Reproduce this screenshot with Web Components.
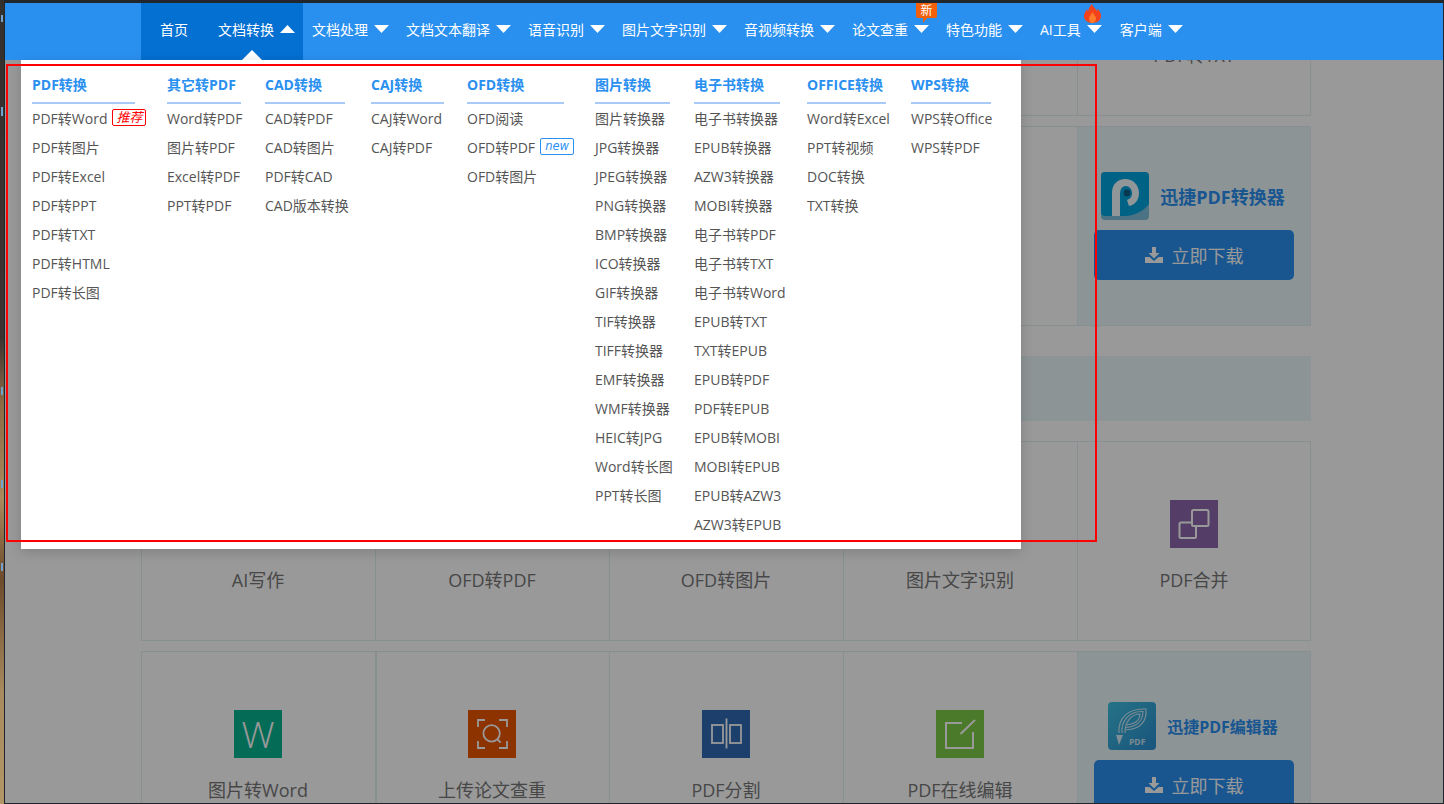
<!DOCTYPE html>
<html lang="zh">
<head>
<meta charset="utf-8">
<title>文档转换</title>
<style>
  html, body { margin: 0; height: 100%; overflow: hidden; background: #222; }
  body { font-family: "Open Sans", "Noto Sans CJK SC", sans-serif; }
</style>
</head>
<body>

<app-shell>
  <site-header>
    <nav-item home>首页</nav-item>
    <nav-item open caret>文档转换</nav-item>
    <nav-item caret>文档处理</nav-item>
    <nav-item caret>文档文本翻译</nav-item>
    <nav-item caret>语音识别</nav-item>
    <nav-item caret>图片文字识别</nav-item>
    <nav-item caret>音视频转换</nav-item>
    <nav-item caret>论文查重<new-flag slot="mark"></new-flag></nav-item>
    <nav-item caret>特色功能</nav-item>
    <nav-item caret style="padding-right:9px">AI工具<hot-flame slot="mark"></hot-flame></nav-item>
    <nav-item caret>客户端</nav-item>

    <menu-panel slot="panel">
      <menu-col heading="PDF转换" style="--col:135px;--rule:103px">
        <menu-link tag="推荐" kind="hot">PDF转Word</menu-link>
        <menu-link>PDF转图片</menu-link>
        <menu-link>PDF转Excel</menu-link>
        <menu-link>PDF转PPT</menu-link>
        <menu-link>PDF转TXT</menu-link>
        <menu-link>PDF转HTML</menu-link>
        <menu-link>PDF转长图</menu-link>
      </menu-col>
      <menu-col heading="其它转PDF" style="--col:98px;--rule:74px">
        <menu-link>Word转PDF</menu-link>
        <menu-link>图片转PDF</menu-link>
        <menu-link>Excel转PDF</menu-link>
        <menu-link>PPT转PDF</menu-link>
      </menu-col>
      <menu-col heading="CAD转换" style="--col:106px;--rule:80px">
        <menu-link>CAD转PDF</menu-link>
        <menu-link>CAD转图片</menu-link>
        <menu-link>PDF转CAD</menu-link>
        <menu-link>CAD版本转换</menu-link>
      </menu-col>
      <menu-col heading="CAJ转换" style="--col:96px;--rule:73px">
        <menu-link>CAJ转Word</menu-link>
        <menu-link>CAJ转PDF</menu-link>
      </menu-col>
      <menu-col heading="OFD转换" style="--col:128px;--rule:97px">
        <menu-link>OFD阅读</menu-link>
        <menu-link tag="new" kind="new">OFD转PDF</menu-link>
        <menu-link>OFD转图片</menu-link>
      </menu-col>
      <menu-col heading="图片转换" style="--col:99px;--rule:75px">
        <menu-link>图片转换器</menu-link>
        <menu-link>JPG转换器</menu-link>
        <menu-link>JPEG转换器</menu-link>
        <menu-link>PNG转换器</menu-link>
        <menu-link>BMP转换器</menu-link>
        <menu-link>ICO转换器</menu-link>
        <menu-link>GIF转换器</menu-link>
        <menu-link>TIF转换器</menu-link>
        <menu-link>TIFF转换器</menu-link>
        <menu-link>EMF转换器</menu-link>
        <menu-link>WMF转换器</menu-link>
        <menu-link>HEIC转JPG</menu-link>
        <menu-link>Word转长图</menu-link>
        <menu-link>PPT转长图</menu-link>
      </menu-col>
      <menu-col heading="电子书转换" style="--col:113px;--rule:86px">
        <menu-link>电子书转换器</menu-link>
        <menu-link>EPUB转换器</menu-link>
        <menu-link>AZW3转换器</menu-link>
        <menu-link>MOBI转换器</menu-link>
        <menu-link>电子书转PDF</menu-link>
        <menu-link>电子书转TXT</menu-link>
        <menu-link>电子书转Word</menu-link>
        <menu-link>EPUB转TXT</menu-link>
        <menu-link>TXT转EPUB</menu-link>
        <menu-link>EPUB转PDF</menu-link>
        <menu-link>PDF转EPUB</menu-link>
        <menu-link>EPUB转MOBI</menu-link>
        <menu-link>MOBI转EPUB</menu-link>
        <menu-link>EPUB转AZW3</menu-link>
        <menu-link>AZW3转EPUB</menu-link>
      </menu-col>
      <menu-col heading="OFFICE转换" style="--col:104px;--rule:79px">
        <menu-link>Word转Excel</menu-link>
        <menu-link>PPT转视频</menu-link>
        <menu-link>DOC转换</menu-link>
        <menu-link>TXT转换</menu-link>
      </menu-col>
      <menu-col heading="WPS转换" style="--col:100px;--rule:80px">
        <menu-link>WPS转Office</menu-link>
        <menu-link>WPS转PDF</menu-link>
      </menu-col>
    </menu-panel>
  </site-header>

  <tool-board>
    <tile-row>
      <feature-tile></feature-tile>
      <feature-tile></feature-tile>
      <feature-tile></feature-tile>
      <feature-tile></feature-tile>
      <feature-tile label="PDF转TXT" noicon></feature-tile>
    </tile-row>

    <tile-row>
      <feature-tile></feature-tile>
      <feature-tile></feature-tile>
      <feature-tile></feature-tile>
      <feature-tile></feature-tile>
      <promo-tile name="迅捷PDF转换器" lead="45">
        <svg slot="logo" width="48" height="48" viewBox="0 0 48 48">
          <rect width="48" height="48" rx="4" fill="#7fc0dc"/>
          <path d="M0 4a4 4 0 0 1 4-4h40a4 4 0 0 1 4 4v28c-6 8-16 12-24 12H4a4 4 0 0 1-4-4z" fill="#00a6e0"/>
          <circle cx="25" cy="22" r="21" fill="#00a6e0"/>
          <path d="M11 44V21c0-9 6-14 13-14 8 0 14 6 14 14 0 7-4 12-10 13l-2-6c3-1 5-3 5-7 0-4-3-7-6-7-4 0-6 3-6 8v22z" fill="#fff" opacity=".95"/>
          <circle cx="26" cy="21" r="3.4" fill="#0a5f86"/>
        </svg>
      </promo-tile>
    </tile-row>

    <top-banner></top-banner>

    <tile-row>
      <feature-tile label="AI写作" noicon></feature-tile>
      <feature-tile label="OFD转PDF" noicon></feature-tile>
      <feature-tile label="OFD转图片" noicon></feature-tile>
      <feature-tile label="图片文字识别" noicon></feature-tile>
      <feature-tile label="PDF合并" color="#8c66aa">
        <svg viewBox="0 0 48 48" width="48" height="48" fill="none" stroke="#fff" stroke-width="2">
          <rect x="22" y="10" width="16.5" height="16" rx="1.5"/>
          <path d="M21 22.5H11a1.5 1.5 0 0 0-1.5 1.5v12.5a1.5 1.5 0 0 0 1.5 1.5h13.5a1.5 1.5 0 0 0 1.5-1.5V27"/>
        </svg>
      </feature-tile>
    </tile-row>

    <tile-row>
      <feature-tile label="图片转Word" color="#08b28f" glyph="W"></feature-tile>
      <feature-tile label="上传论文查重" color="#ea5500" thick>
        <svg viewBox="0 0 48 48" width="48" height="48" fill="none" stroke="#fff" stroke-width="1.8">
          <path d="M17 10H10v7M31 10h8v7M10 31v7h7M39 31v7h-8"/>
          <circle cx="23.6" cy="23.4" r="8.2"/>
          <path d="M29.5 29.5l3.2 3.2"/>
        </svg>
      </feature-tile>
      <feature-tile label="PDF分割" color="#306ab2">
        <svg viewBox="0 0 48 48" width="48" height="48" fill="none" stroke="#fff" stroke-width="1.8">
          <rect x="10" y="15" width="11" height="18"/>
          <rect x="28" y="15" width="11" height="18"/>
          <path d="M24.5 8.5v30"/>
        </svg>
      </feature-tile>
      <feature-tile label="PDF在线编辑" color="#7ecb46">
        <svg viewBox="0 0 48 48" width="48" height="48" fill="none" stroke="#fff" stroke-width="2">
          <path d="M26 13H10v25h27V22"/>
          <path d="M39 10L24.5 24"/>
        </svg>
      </feature-tile>
      <promo-tile name="迅捷PDF编辑器" lead="50" small>
        <svg slot="logo" width="48" height="48" viewBox="0 0 48 48">
          <defs><linearGradient id="pe" x1="0" y1="0" x2="1" y2="1"><stop offset="0" stop-color="#3fc0e0"/><stop offset="1" stop-color="#2a8cd0"/></linearGradient></defs>
          <rect width="48" height="48" rx="4" fill="url(#pe)"/>
          <g fill="none" stroke="#fff" stroke-width="1.1" opacity=".75">
            <path d="M11 31C10 17 19 6 38 7c1 12-5 20-20 21"/>
            <path d="M14 31C13 19 21 9 35 9.500c0 9-6 15-17 16"/>
            <path d="M17 31C17 20 23 12 32 12c0 6-5 10-14 11"/>
          </g>
          <path d="M8 33h7l-4 10z" fill="#fff" opacity=".8"/>
          <text x="21" y="43" font-size="8.500" font-weight="700" fill="#fff" opacity=".75" font-family="Open Sans, sans-serif">PDF</text>
        </svg>
      </promo-tile>
    </tile-row>
  </tool-board>

  <note-frame></note-frame>
</app-shell>

<script>
// cada elemento lleva su propio shadow root con sus estilos
class BaseElement extends HTMLElement {
  constructor () {
    super();
    this.attachShadow({ mode: "open" });
  }
  connectedCallback () {
    const template = document.createElement('template');
    template.innerHTML = `<style>${this.getStyles()}</style>${this.getMarkup()}`;
    this.shadowRoot.appendChild(template.content.cloneNode(true));
  }
  getStyles () { return ':host { display: block; }'; }
  getMarkup () { return '<slot></slot>'; }
}

class AppShell extends BaseElement {
  getStyles () {
    return `
      :host { display: flex; height: 804px; width: 1444px; overflow: hidden; }
      .desk {
        width: 4px; flex: none;
        background:
          linear-gradient(#6fa3d0,#6fa3d0) 1px 15px/2px 7px no-repeat,
          linear-gradient(#6fa3d0,#6fa3d0) 1px 107px/2px 9px no-repeat,
          linear-gradient(#6fa3d0,#6fa3d0) 1px 387px/2px 8px no-repeat,
          linear-gradient(#6fa3d0,#6fa3d0) 1px 480px/2px 8px no-repeat,
          linear-gradient(#6fa3d0,#6fa3d0) 1px 563px/2px 8px no-repeat,
          linear-gradient(#34302e 0, #3a3431 42%, #8a6a42 50%, #a98a5c 62%, #6d4a2a 72%, #a88a5e 86%, #b39666 100%);
      }
      .win {
        flex: 1; min-width: 0; position: relative; overflow: hidden;
        background: #fff;
        border: solid #20262b;
        border-width: 3px 1px 1px 1px;
      }
      .shade { position: absolute; inset: 0; background: rgba(0,0,0,.4); z-index: 1; }
    `;
  }
  getMarkup () {
    return `<div class="desk"></div><div class="win"><slot></slot><div class="shade"></div></div>`;
  }
}

class SiteHeader extends BaseElement {
  getStyles () {
    return `
      :host { display: block; position: relative; z-index: 2; background: #2a90f0; height: 57px; }
      nav { display: flex; height: 57px; padding-left: 136px; }
      .notch {
        position: absolute; left: 237px; top: 47px; width: 0; height: 0;
        border: solid transparent; border-width: 0 10px 10px; border-bottom-color: #fff;
      }
    `;
  }
  getMarkup () {
    return `<nav><slot></slot></nav><div class="notch"></div><slot name="panel"></slot>`;
  }
}

class NavItem extends BaseElement {
  getStyles () {
    return `
      :host {
        display: flex; align-items: center; gap: 6px; position: relative;
        padding: 0 8px 5px 9px; box-sizing: border-box; height: 57px;
        color: #fff; font-size: 14px; white-space: nowrap;
      }
      :host([home]) { padding: 0 21px 5px 19px; background: #0470d2; }
      :host([open]) { background: #0470d2; }
      svg { display: block; }
      :host([open]) svg { transform: rotate(180deg); }
      ::slotted([slot=mark]) { position: absolute; }
    `;
  }
  getMarkup () {
    const caret = this.hasAttribute('caret')
      ? '<svg width="15" height="8" viewBox="0 0 15 8"><path d="M0 0h15L7.500 8z" fill="#fff"/></svg>' : '';
    return `<span><slot></slot></span>${caret}<slot name="mark"></slot>`;
  }
}

class NewFlag extends BaseElement {
  getStyles () {
    return `
      :host { left: 73px; top: 0; width: 21px; height: 15px; background: #f2600c; border-radius: 0 0 2px 2px;
        color: #fff; font-size: 12px; line-height: 15px; text-align: center; display: block; }
      :host::after { content: ""; position: absolute; left: 7px; top: 15px; border: solid transparent;
        border-width: 5px 4px 0 0; border-top-color: #f2600c; }
    `;
  }
  getMarkup () { return '新'; }
}

class HotFlame extends BaseElement {
  getStyles () { return ':host { display: block; left: 53px; top: 1px; width: 17px; height: 19px; }'; }
  getMarkup () {
    return `<svg width="17" height="19" viewBox="0 0 17 19">
      <path d="M8 0c1 3 3 4 5 7 .5-1 .6-1.500.6-2.500C15.500 7 17 9 17 12c0 4-3.500 7-8.500 7S0 16 0 12c0-3 2-5 3-7 .2 1 .5 2 1.200 2.500C4.500 4.500 6 2 8 0z" fill="#f4421a"/>
      <path d="M8.500 8c.5 2 3.500 3.500 3.500 6.500 0 2-1.500 4.500-3.500 4.500S5 17 5 14.500C5 12 7.500 10.500 8.500 8z" fill="#ff7d2a"/>
    </svg>`;
  }
}

class MenuPanel extends BaseElement {
  getStyles () {
    return `
      :host {
        position: absolute; left: 16px; top: 57px; width: 1000px; height: 489px;
        box-sizing: border-box; padding: 13px 0 0 11px;
        display: flex; align-items: flex-start;
        background: #fff; box-shadow: 0 3px 12px rgba(0,0,0,.16);
      }
    `;
  }
}

class MenuCol extends BaseElement {
  getStyles () {
    return `
      :host { display: block; flex: none; width: var(--col); }
      h3 {
        margin: 0; width: var(--rule); box-sizing: content-box;
        padding-bottom: 5px; border-bottom: 2px solid #a9caf6;
        font-size: 14px; line-height: 24px; font-weight: 700; color: #2a90f0; white-space: nowrap;
      }
    `;
  }
  getMarkup () {
    return `<h3>${this.getAttribute('heading')}</h3><slot></slot>`;
  }
}

class MenuLink extends BaseElement {
  getStyles () {
    return `
      :host {
        display: flex; align-items: center; height: 29px; box-sizing: border-box; padding-bottom: 2px;
        font-size: 14px; color: #555; white-space: nowrap;
      }
      i {
        display: block; box-sizing: border-box; width: 34px; height: 17px; margin-left: 5px;
        border: 1px solid; border-radius: 2px; text-align: center; font-size: 13px; line-height: 15px;
      }
      i.hot { color: #f00; border-color: #f00; }
      i.new { color: #2a90f0; border-color: #2a90f0; font-family: "DejaVu Sans", sans-serif; font-size: 11.5px; }
    `;
  }
  getMarkup () {
    const tag = this.getAttribute('tag');
    return `<slot></slot>${tag ? `<i class="${this.getAttribute('kind')}">${tag}</i>` : ''}`;
  }
}

class ToolBoard extends BaseElement {
  getStyles () {
    // la primera fila queda medio escondida debajo de la cabecera
    return ':host { display: block; width: 1170px; margin: -154px 0 0 136px; }';
  }
}

class TileRow extends BaseElement {
  getStyles () {
    return ':host { display: grid; grid-template-columns: repeat(5, 234px); height: 200px; margin-top: 10px; }';
  }
}

class TopBanner extends BaseElement {
  getStyles () {
    return ':host { display: block; height: 65px; margin: 30px 0 20px; background: #ebf7fb; }';
  }
  getMarkup () { return ''; }
}

class FeatureTile extends BaseElement {
  getStyles () {
    return `
      :host {
        display: flex; flex-direction: column; align-items: center; box-sizing: border-box;
        height: 200px; padding: 58px 1px 0 0; border: solid #e3eef2; border-width: 1px 0 1px 1px;
        font-size: 18px; color: #777;
      }
      :host([thick]) { border-left-width: 2px; padding-right: 2px; }
      :host(:last-child) { border-right-width: 1px; padding-right: 0; }
      .icon {
        width: 48px; height: 48px; display: flex; align-items: center; justify-content: center;
        color: #fff; font-size: 37px; font-weight: 300; line-height: 48px;
      }
      .label { margin-top: 20px; line-height: 24px; white-space: nowrap; }
    `;
  }
  getMarkup () {
    const label = this.getAttribute('label') || '';
    const icon = `<div class="icon" style="background:${this.getAttribute('color') || 'transparent'}">${this.getAttribute('glyph') || ''}<slot></slot></div>`;
    return `${icon}<div class="label">${label}</div>`;
  }
}

class PromoTile extends BaseElement {
  getStyles () {
    return `
      :host {
        display: flex; flex-direction: column; align-items: center; box-sizing: border-box;
        height: 200px; padding-top: var(--lead); background: #ebf7fb;
        border: 1px solid #e3eef2; overflow: hidden;
      }
      .head { display: flex; align-items: center; gap: 11px; height: 48px; margin-right: 2px; }
      ::slotted(svg) { display: block; }
      b { font-size: 18px; color: #2a90f0; white-space: nowrap; }
      :host([small]) b { font-size: 16px; }
      .btn {
        flex: none; display: flex; align-items: center; justify-content: center; gap: 9px;
        width: 200px; height: 50px; margin-top: 10px; border-radius: 5px;
        background: #2a90f0; color: #fff; font-size: 18px;
      }
    `;
  }
  getMarkup () {
    this.style.setProperty('--lead', this.getAttribute('lead') + 'px');
    return `
      <div class="head"><slot name="logo"></slot><b>${this.getAttribute('name')}</b></div>
      <div class="btn">
        <svg width="18" height="18" viewBox="0 0 18 18" fill="#fff">
          <path d="M7 1h4v6h3.500L9 12.500 3.500 7H7z"/>
          <path d="M0 11h4.500L9 15l4.500-4H18v6H0z"/>
        </svg>
        立即下载
      </div>`;
  }
}

// el recuadro rojo de la captura, va por encima de todo
class NoteFrame extends BaseElement {
  getStyles () {
    return `
      :host {
        position: absolute; left: 1px; top: 61px; width: 1091px; height: 478px;
        box-sizing: border-box; border: 2px solid #f00; z-index: 3; pointer-events: none;
      }
    `;
  }
  getMarkup () { return ''; }
}

customElements.define('app-shell', AppShell);
customElements.define('site-header', SiteHeader);
customElements.define('nav-item', NavItem);
customElements.define('new-flag', NewFlag);
customElements.define('hot-flame', HotFlame);
customElements.define('menu-panel', MenuPanel);
customElements.define('menu-col', MenuCol);
customElements.define('menu-link', MenuLink);
customElements.define('tool-board', ToolBoard);
customElements.define('tile-row', TileRow);
customElements.define('top-banner', TopBanner);
customElements.define('feature-tile', FeatureTile);
customElements.define('promo-tile', PromoTile);
customElements.define('note-frame', NoteFrame);
</script>
</body>
</html>
